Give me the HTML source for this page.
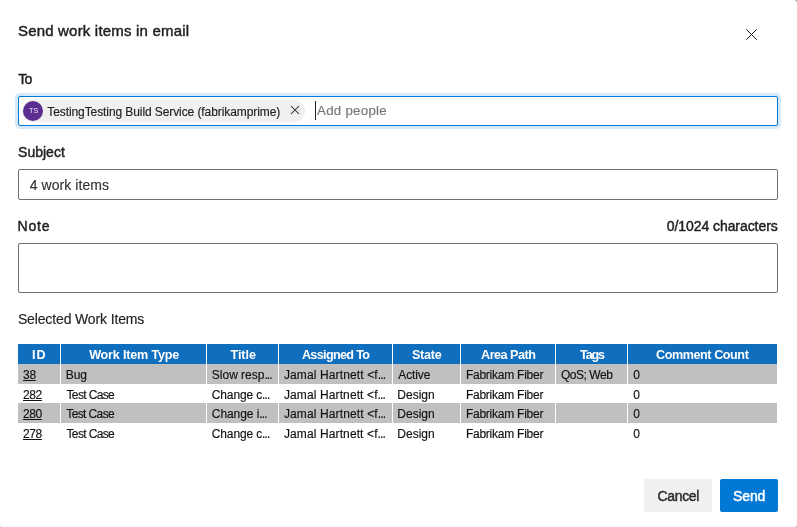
<!DOCTYPE html>
<html lang="en"><head><meta charset="utf-8"><title>Send work items in email</title>
<style>
html,body{margin:0;padding:0;}
html{background:#8a8a8a;}
body{width:797px;height:527px;position:relative;overflow:hidden;background:#fff;border-radius:0 3px 2.5px 1.5px;font-family:"Liberation Sans",sans-serif;}
.t{position:absolute;white-space:nowrap;line-height:20px;height:20px;}

.e{letter-spacing:-0.9px;}
#txt{position:absolute;left:0;top:0;width:797px;height:527px;will-change:transform;}
.box{position:absolute;box-sizing:border-box;border:1px solid #707070;border-radius:2px;background:#fff;}
.box.focus{border-color:#0078d4;box-shadow:0 0 0 3px rgba(0,120,212,.16);}
.pill{position:absolute;left:22px;top:100px;width:283px;height:22px;border-radius:11px;background:#f0f0f0;}
.av{position:absolute;left:23px;top:101px;width:20px;height:20px;border-radius:50%;background:#5c2d91;}
.caret{position:absolute;left:315px;top:101px;width:1px;height:19px;background:#222;}
.btn{position:absolute;top:479px;height:33px;border-radius:2px;}
.hd{position:absolute;background:#106ebe;}
.gr{position:absolute;background:#c0c0c0;}
.sep{position:absolute;background:#fff;}
svg{position:absolute;overflow:visible;}
</style></head><body>
<svg style="left:745.5px;top:28.5px" width="11" height="11" viewBox="0 0 11 11"><path d="M0.3 0.3L10.7 10.7M10.7 0.3L0.3 10.7" stroke="#1a1a1a" stroke-width="1" fill="none"/></svg>
<div class="box focus" style="left:18px;top:96px;width:760px;height:30px"></div>
<div class="pill"></div><div class="av"></div>
<svg style="left:291px;top:106px" width="8" height="8" viewBox="0 0 8 8"><path d="M0 0L8 8M8 0L0 8" stroke="#222" stroke-width="1.05" fill="none"/></svg>
<div class="caret"></div>
<div class="box" style="left:18px;top:169px;width:760px;height:31px"></div>
<div class="box" style="left:18px;top:243px;width:760px;height:50px"></div>
<div class="hd" style="left:18px;top:344px;width:759px;height:20px"></div>
<div class="gr" style="left:18px;top:364px;width:759px;height:19.5px"></div>
<div class="gr" style="left:18px;top:403px;width:759px;height:19.5px"></div>
<div class="sep" style="left:60px;top:344px;width:1px;height:98px"></div>
<div class="sep" style="left:206px;top:344px;width:1px;height:98px"></div>
<div class="sep" style="left:278px;top:344px;width:1px;height:98px"></div>
<div class="sep" style="left:392px;top:344px;width:1px;height:98px"></div>
<div class="sep" style="left:460px;top:344px;width:1px;height:98px"></div>
<div class="sep" style="left:555px;top:344px;width:1px;height:98px"></div>
<div class="sep" style="left:627px;top:344px;width:1px;height:98px"></div>
<div class="btn" style="left:644px;width:68px;background:#f0f0f0"></div>
<div class="btn" style="left:720px;width:58px;background:#0078d4"></div>
<div id="txt">
<span id="title" class="t" style="left:17.95px;top:21.15px;font-size:15px;color:#1f1f1f;letter-spacing:0.190px;-webkit-text-stroke:0.45px;">Send work items in email</span>
<span id="to" class="t" style="left:18.20px;top:69.10px;font-size:14px;color:#1f1f1f;letter-spacing:-0.690px;-webkit-text-stroke:0.45px;">To</span>
<span id="subj" class="t" style="left:18.06px;top:141.70px;font-size:14px;color:#1f1f1f;letter-spacing:0.013px;-webkit-text-stroke:0.45px;">Subject</span>
<span id="note" class="t" style="left:17.52px;top:216.10px;font-size:14px;color:#1f1f1f;letter-spacing:0.823px;-webkit-text-stroke:0.45px;">Note</span>
<span id="cnt" class="t" style="left:666.75px;top:216.10px;font-size:14px;color:#1f1f1f;letter-spacing:-0.067px;-webkit-text-stroke:0.45px;">0/1024 characters</span>
<span id="sel" class="t" style="left:17.90px;top:309.10px;font-size:14px;color:#222;letter-spacing:-0.136px;-webkit-text-stroke:0.15px;">Selected Work Items</span>
<span id="sval" class="t" style="left:29.75px;top:174.60px;font-size:14px;color:#333;letter-spacing:0.065px;-webkit-text-stroke:0.15px;">4 work items</span>
<span id="pill" class="t" style="left:47.25px;top:101.80px;font-size:12px;color:#222;letter-spacing:-0.088px;-webkit-text-stroke:0.15px;">TestingTesting Build Service (fabrikamprime)</span>
<span id="ph" class="t" style="left:317.00px;top:100.84px;font-size:13.3px;color:#767676;letter-spacing:0.268px;-webkit-text-stroke:0.15px;">Add people</span>
<span id="cancel" class="t" style="left:657.60px;top:486.30px;font-size:14px;color:#2b2b2b;letter-spacing:-0.356px;-webkit-text-stroke:0.45px;">Cancel</span>
<span id="send" class="t" style="left:733.06px;top:486.30px;font-size:14px;color:#fff;letter-spacing:-0.120px;-webkit-text-stroke:0.45px;">Send</span>
<span id="ts" class="t" style="left:29.00px;top:101.25px;font-size:7.3px;color:rgba(255,255,255,.9);letter-spacing:0.000px;-webkit-text-stroke:0.15px;-webkit-text-stroke:0;">TS</span>
<span id="h0" class="t" style="left:32.10px;top:345.39px;font-size:12.6px;color:#fff;letter-spacing:0.960px;font-weight:bold;">ID</span>
<span id="h1" class="t" style="left:89.15px;top:345.39px;font-size:12.6px;color:#fff;letter-spacing:-0.185px;font-weight:bold;">Work Item Type</span>
<span id="h2" class="t" style="left:230.55px;top:345.39px;font-size:12.6px;color:#fff;letter-spacing:-0.077px;font-weight:bold;">Title</span>
<span id="h3" class="t" style="left:301.95px;top:345.39px;font-size:12.6px;color:#fff;letter-spacing:-0.664px;font-weight:bold;">Assigned To</span>
<span id="h4" class="t" style="left:411.94px;top:345.39px;font-size:12.6px;color:#fff;letter-spacing:-0.250px;font-weight:bold;">State</span>
<span id="h5" class="t" style="left:481.06px;top:345.39px;font-size:12.6px;color:#fff;letter-spacing:-0.501px;font-weight:bold;">Area Path</span>
<span id="h6" class="t" style="left:580.05px;top:345.39px;font-size:12.6px;color:#fff;letter-spacing:-1.150px;font-weight:bold;">Tags</span>
<span id="h7" class="t" style="left:656.00px;top:345.39px;font-size:12.6px;color:#fff;letter-spacing:-0.426px;font-weight:bold;">Comment Count</span>
<span id="r0c0" class="t" style="left:23.00px;top:364.50px;font-size:12px;color:#111;letter-spacing:-0.235px;-webkit-text-stroke:0.15px;text-decoration:underline;">38</span>
<span id="r0c1" class="t" style="left:65.65px;top:364.50px;font-size:12px;color:#111;letter-spacing:0.010px;-webkit-text-stroke:0.15px;">Bug</span>
<span id="r0c2" class="t" style="left:211.83px;top:364.50px;font-size:12px;color:#111;letter-spacing:-0.010px;-webkit-text-stroke:0.15px;">Slow resp<span class="e">...</span></span>
<span id="r0c3" class="t" style="left:283.90px;top:364.50px;font-size:12px;color:#111;letter-spacing:0.131px;-webkit-text-stroke:0.15px;">Jamal Hartnett &lt;f<span class="e">...</span></span>
<span id="r0c4" class="t" style="left:398.30px;top:364.50px;font-size:12px;color:#111;letter-spacing:-0.134px;-webkit-text-stroke:0.15px;">Active</span>
<span id="r0c5" class="t" style="left:465.88px;top:364.50px;font-size:12px;color:#111;letter-spacing:-0.240px;-webkit-text-stroke:0.15px;">Fabrikam Fiber</span>
<span id="r0c6" class="t" style="left:560.95px;top:364.50px;font-size:12px;color:#111;letter-spacing:-0.449px;-webkit-text-stroke:0.15px;">QoS; Web</span>
<span id="r0c7" class="t" style="left:633.30px;top:364.50px;font-size:12px;color:#111;letter-spacing:0.000px;-webkit-text-stroke:0.15px;">0</span>
<span id="r1c0" class="t" style="left:23.00px;top:384.50px;font-size:12px;color:#111;letter-spacing:-0.383px;-webkit-text-stroke:0.15px;text-decoration:underline;">282</span>
<span id="r1c1" class="t" style="left:66.50px;top:384.50px;font-size:12px;color:#111;letter-spacing:-0.641px;-webkit-text-stroke:0.15px;">Test Case</span>
<span id="r1c2" class="t" style="left:211.80px;top:384.50px;font-size:12px;color:#111;letter-spacing:-0.143px;-webkit-text-stroke:0.15px;">Change c<span class="e">...</span></span>
<span id="r1c3" class="t" style="left:283.90px;top:384.50px;font-size:12px;color:#111;letter-spacing:0.118px;-webkit-text-stroke:0.15px;">Jamal Hartnett &lt;f<span class="e">...</span></span>
<span id="r1c4" class="t" style="left:397.33px;top:384.50px;font-size:12px;color:#111;letter-spacing:0.008px;-webkit-text-stroke:0.15px;">Design</span>
<span id="r1c5" class="t" style="left:465.88px;top:384.50px;font-size:12px;color:#111;letter-spacing:-0.240px;-webkit-text-stroke:0.15px;">Fabrikam Fiber</span>
<span id="r1c7" class="t" style="left:633.30px;top:384.50px;font-size:12px;color:#111;letter-spacing:0.000px;-webkit-text-stroke:0.15px;">0</span>
<span id="r2c0" class="t" style="left:23.00px;top:403.60px;font-size:12px;color:#111;letter-spacing:-0.383px;-webkit-text-stroke:0.15px;text-decoration:underline;">280</span>
<span id="r2c1" class="t" style="left:66.25px;top:403.60px;font-size:12px;color:#111;letter-spacing:-0.610px;-webkit-text-stroke:0.15px;">Test Case</span>
<span id="r2c2" class="t" style="left:211.80px;top:403.60px;font-size:12px;color:#111;letter-spacing:-0.070px;-webkit-text-stroke:0.15px;">Change i<span class="e">...</span></span>
<span id="r2c3" class="t" style="left:283.90px;top:403.60px;font-size:12px;color:#111;letter-spacing:0.131px;-webkit-text-stroke:0.15px;">Jamal Hartnett &lt;f<span class="e">...</span></span>
<span id="r2c4" class="t" style="left:397.33px;top:403.60px;font-size:12px;color:#111;letter-spacing:0.008px;-webkit-text-stroke:0.15px;">Design</span>
<span id="r2c5" class="t" style="left:465.88px;top:403.60px;font-size:12px;color:#111;letter-spacing:-0.240px;-webkit-text-stroke:0.15px;">Fabrikam Fiber</span>
<span id="r2c7" class="t" style="left:633.30px;top:403.60px;font-size:12px;color:#111;letter-spacing:0.000px;-webkit-text-stroke:0.15px;">0</span>
<span id="r3c0" class="t" style="left:23.00px;top:423.50px;font-size:12px;color:#111;letter-spacing:-0.383px;-webkit-text-stroke:0.15px;text-decoration:underline;">278</span>
<span id="r3c1" class="t" style="left:66.50px;top:423.50px;font-size:12px;color:#111;letter-spacing:-0.641px;-webkit-text-stroke:0.15px;">Test Case</span>
<span id="r3c2" class="t" style="left:211.80px;top:423.50px;font-size:12px;color:#111;letter-spacing:-0.143px;-webkit-text-stroke:0.15px;">Change c<span class="e">...</span></span>
<span id="r3c3" class="t" style="left:283.90px;top:423.50px;font-size:12px;color:#111;letter-spacing:0.118px;-webkit-text-stroke:0.15px;">Jamal Hartnett &lt;f<span class="e">...</span></span>
<span id="r3c4" class="t" style="left:397.33px;top:423.50px;font-size:12px;color:#111;letter-spacing:0.008px;-webkit-text-stroke:0.15px;">Design</span>
<span id="r3c5" class="t" style="left:465.88px;top:423.50px;font-size:12px;color:#111;letter-spacing:-0.240px;-webkit-text-stroke:0.15px;">Fabrikam Fiber</span>
<span id="r3c7" class="t" style="left:633.30px;top:423.50px;font-size:12px;color:#111;letter-spacing:0.000px;-webkit-text-stroke:0.15px;">0</span>
</div>
</body></html>
